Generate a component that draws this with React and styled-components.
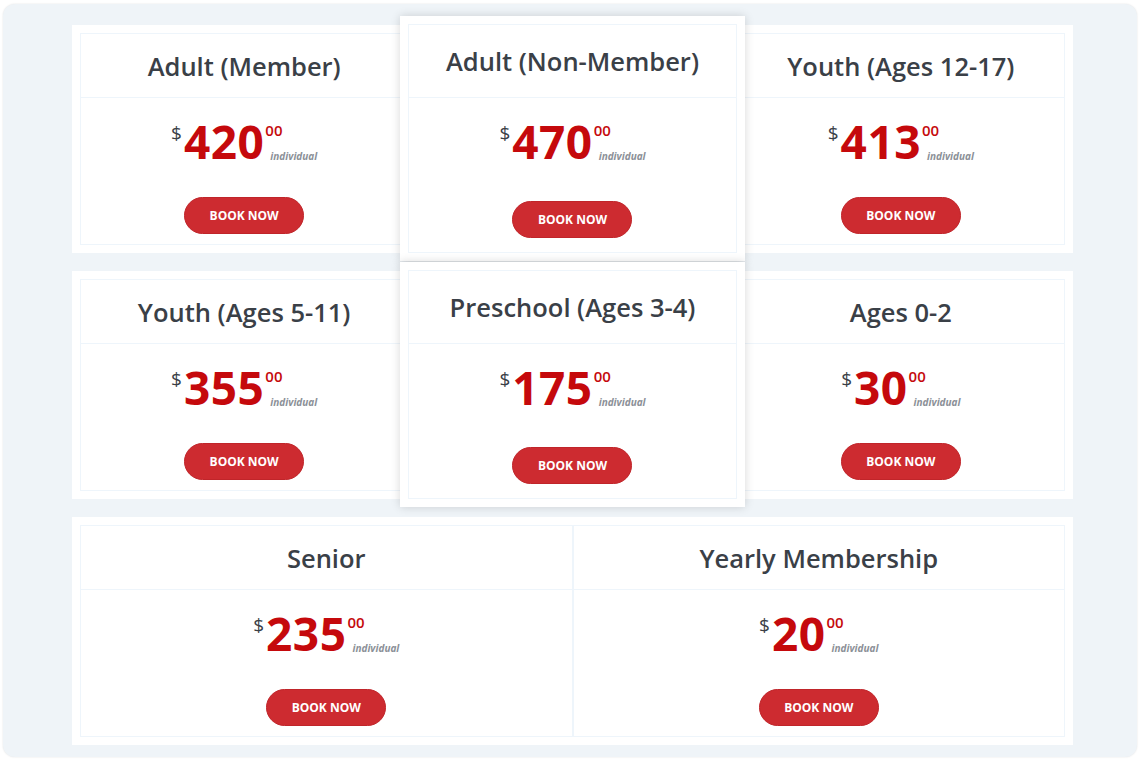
import { createGlobalStyle, styled } from "styled-components";

const GlobalStyle = createGlobalStyle`
  html, body {
    margin: 0;
    padding: 0;
    background: #ffffff;
    font-family: "Open Sans", "Noto Sans", sans-serif;
  }
  * {
    box-sizing: border-box;
  }
`;

const Frame = styled.div`
  margin: 4px 4px 3px 3px;
  height: 753px;
  padding: 21px 0 11px 69px;
  background: #eff4f8;
  border-radius: 12px;
  box-shadow: 0 0 2px rgba(0, 0, 0, 0.12);
  display: flex;
  flex-direction: column;
  gap: 18px;
`;

const Panel = styled.div`
  width: 1001px;
  padding: 8px;
  background: #ffffff;
  display: grid;
  grid-template-columns: repeat(${({ $cols }) => $cols}, 1fr);
`;

const Featured = styled.div`
  position: relative;
  z-index: 1;
  margin: -17px -8px -16px;
  padding: 8px;
  background: #ffffff;
  box-shadow: 0 0 9px rgba(0, 0, 0, 0.16);
`;

const CardBox = styled.div`
  height: ${({ $featured }) => ($featured ? "100%" : "212px")};
  border: 1px solid #eef5fb;
  display: flex;
  flex-direction: column;
  background: #ffffff;
`;

const Header = styled.div`
  height: ${({ $featured }) => ($featured ? "73px" : "64px")};
  flex-shrink: 0;
  border-bottom: 1px solid #eef5fb;
  display: flex;
  align-items: center;
  justify-content: center;
`;

const Title = styled.h3`
  margin: 0;
  font-size: 25.5px;
  font-weight: 600;
  color: #3a4047;
`;

const Body = styled.div`
  flex: 1;
  display: flex;
  flex-direction: column;
  align-items: center;
  padding-top: 20px;
`;

const Price = styled.div`
  display: inline-flex;
  align-items: flex-start;
`;

const Dollar = styled.span`
  margin-top: 6px;
  margin-right: 2px;
  font-size: 19px;
  line-height: 1;
  font-weight: 400;
  color: #3a4047;
`;

const Amount = styled.span`
  font-size: 46px;
  line-height: 1;
  font-weight: 700;
  color: #c5090c;
  letter-spacing: 0.5px;
`;

const Extra = styled.div`
  display: flex;
  flex-direction: column;
  align-items: flex-start;
  margin-left: 1px;
`;

const Cents = styled.span`
  margin-top: 5px;
  font-size: 15px;
  line-height: 1;
  font-weight: 600;
  color: #c5090c;
`;

const Per = styled.span`
  margin-top: 13px;
  margin-left: 5px;
  font-size: 10px;
  line-height: 1;
  font-style: italic;
  font-weight: 700;
  color: #8b9097;
`;

const BookButton = styled.button`
  margin-top: ${({ $featured }) => ($featured ? "37px" : "33px")};
  width: 120px;
  height: 37px;
  border: 1px solid #c0252a;
  border-radius: 19px;
  background: #cd2b30;
  color: #ffffff;
  font-family: inherit;
  font-size: 12px;
  font-weight: 700;
  cursor: pointer;
`;

const rows = [
  [
    { title: "Adult (Member)", price: "420" },
    { title: "Adult (Non-Member)", price: "470", featured: true },
    { title: "Youth (Ages 12-17)", price: "413" },
  ],
  [
    { title: "Youth (Ages 5-11)", price: "355" },
    { title: "Preschool (Ages 3-4)", price: "175", featured: true },
    { title: "Ages 0-2", price: "30" },
  ],
  [
    { title: "Senior", price: "235" },
    { title: "Yearly Membership", price: "20" },
  ],
];

const PriceCard = ({ title, price, featured }) => {
  const card = (
    <CardBox $featured={featured}>
      <Header $featured={featured}>
        <Title>{title}</Title>
      </Header>
      <Body>
        <Price>
          <Dollar>$</Dollar>
          <Amount>{price}</Amount>
          <Extra>
            <Cents>00</Cents>
            <Per>individual</Per>
          </Extra>
        </Price>
        <BookButton $featured={featured}>BOOK NOW</BookButton>
      </Body>
    </CardBox>
  );
  return featured ? <Featured>{card}</Featured> : card;
};

export default function App() {
  return (
    <>
      <GlobalStyle />
      <Frame>
        {rows.map((row, i) => (
          <Panel key={i} $cols={row.length}>
            {row.map((item) => (
              <PriceCard key={item.title} {...item} />
            ))}
          </Panel>
        ))}
      </Frame>
    </>
  );
}
